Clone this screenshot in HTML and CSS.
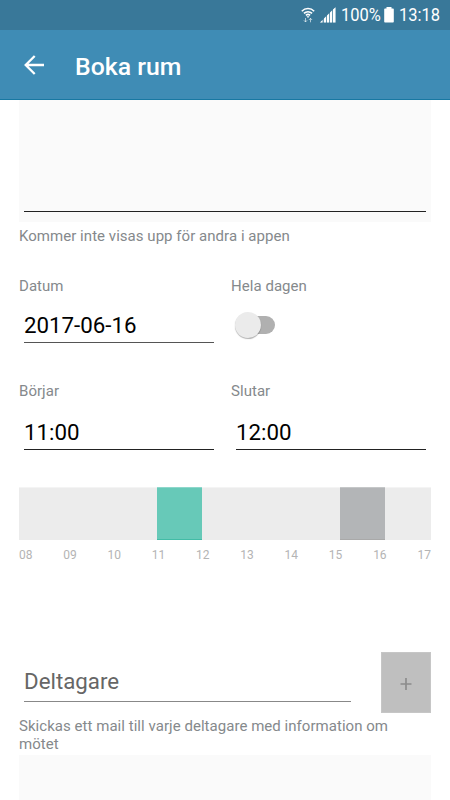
FILE: index.html
```html
<!DOCTYPE html>
<html lang="sv">
<head>
<meta charset="utf-8">
<title>Boka rum</title>
<link rel="stylesheet" href="styles.css">
</head>
<body>
<div class="status">
  <svg class="wifi" width="14" height="17" viewBox="0 0 14 17" fill="none" stroke="#fff">
    <path d="M.8 4.2C4.300.600 9.700.600 13.200 4.200M2.900 6.400c2.300-2.300 5.900-2.300 8.200 0M4.900 8.400c1.200-1.200 3-1.200 4.200 0" stroke-width="1.500"/>
    <path d="M5.500 9.200h3L7 10.900z" fill="#fff" stroke="none"/>
    <path d="M4.500 11v4M2.900 13.300l1.600 1.700 1.600-1.700M9.500 15.300v-4M7.900 13l1.600-1.700 1.600 1.700" stroke-opacity=".6"/>
  </svg>
  <svg class="signal" width="16" height="16" viewBox="0 0 16 16" fill="#fff">
    <path d="M0 15.500L2.500 13v2.500zM4 11.500L6 9.500v6H4zM7 8.500l2-2v9H7zM10 5.500l2-2v12h-2zM13 2.500l2.500-2.300v15.300H13z"/>
    <path d="M0 15.500L15.500.2v15.300z" opacity=".25"/>
  </svg>
  <span class="percent">100%</span>
  <svg class="battery" width="10" height="16" viewBox="0 0 10 16" fill="#fff"><path d="M2.500 0h5v1.500H9a.8.8 0 0 1 .8.800v12.400a.8.8 0 0 1-.8.800H1a.8.8 0 0 1-.8-.8V2.300a.8.8 0 0 1 .8-.8h1.500z"/></svg>
  <span class="clock">13:18</span>
</div>
<header class="appbar">
  <svg class="back" width="20" height="20" viewBox="0 0 20 20" fill="none" stroke="#fff" stroke-width="2.300"><path d="M20 10H1.800M10.700 1L1.700 10l9 9"/></svg>
  <h1>Boka rum</h1>
</header>
<main>
  <div class="notes"><div class="notes-line"></div></div>
  <p class="caption notes-caption">Kommer inte visas upp för andra i appen</p>
  <div class="row date-row">
    <div class="field">
      <div class="caption">Datum</div>
      <div class="input">2017-06-16</div>
    </div>
    <div class="field">
      <div class="caption">Hela dagen</div>
      <div class="switch"><div class="thumb"></div></div>
    </div>
  </div>
  <div class="row time-row">
    <div class="field">
      <div class="caption">Börjar</div>
      <div class="input">11:00</div>
    </div>
    <div class="field">
      <div class="caption">Slutar</div>
      <div class="input">12:00</div>
    </div>
  </div>
  <div class="timeline"><div class="chosen"></div><div class="busy"></div></div>
  <div class="hours"><span>08</span><span>09</span><span>10</span><span>11</span><span>12</span><span>13</span><span>14</span><span>15</span><span>16</span><span>17</span></div>
  <div class="participants">
    <div class="input hint">Deltagare</div>
    <div class="add"><svg width="12" height="12" viewBox="0 0 12 12" stroke="#8c8c8c" stroke-width="1.700"><path d="M.5 6h11M6 0v12"/></svg></div>
  </div>
  <p class="caption mail">Skickas ett mail till varje deltagare med information om mötet</p>
  <div class="list"></div>
</main>
</body>
</html>
```
FILE: styles.css
```css
* { box-sizing: border-box; }
body {
  margin: 0;
  width: 450px;
  height: 800px;
  overflow: hidden;
  background: #fff;
  color: #000;
  font-family: Roboto, "Liberation Sans", sans-serif;
}
.status {
  display: flex;
  align-items: center;
  justify-content: flex-end;
  height: 30px;
  padding-right: 10px;
  background: #397899;
  color: #fff;
  font-size: 18.500px;
  line-height: 31px;
}
.wifi { margin-right: 5px; }
.signal { margin-right: 5px; }
.percent, .clock { transform: scaleX(.89); transform-origin: 0 50%; white-space: nowrap; }
.percent { width: 40px; }
.battery { margin: 0 5px 0 3px; }
.clock { width: 41px; }
.appbar {
  display: flex;
  align-items: center;
  height: 70px;
  padding-left: 24px;
  border-bottom: 1px solid #1878a2;
  background: #3f8cb5;
  color: #fff;
}
.back { margin-right: 31px; }
h1 { margin: 4px 0 0; font-size: 24.800px; font-weight: 500; line-height: 30px; }
main { padding: 0 19px; }
.notes { height: 122px; padding: 111px 5px 0; background: #fafafa; }
.notes-line { height: 1px; background: #222; }
.caption { margin: 0; color: #85898c; font-size: 15px; letter-spacing: .040px; line-height: 18px; }
.notes-caption { margin-top: 5px; }
.row { display: grid; grid-template-columns: 200px 200px; column-gap: 12px; }
.date-row { margin-top: 32px; height: 66px; }
.time-row { margin-top: 39px; height: 68px; }
.input {
  margin-left: 5px;
  font-size: 22.300px;
  line-height: 30px;
  white-space: nowrap;
  border-bottom: 1px solid #555;
}
.field .input { width: 190px; height: 36px; margin-top: 12px; padding-top: 3px; }
.time-row .input { margin-top: 14px; border-color: #222; }
.switch {
  width: 36px;
  height: 18px;
  margin: 21px 0 0 8px;
  border-radius: 9px;
  background: #b0b0b0;
}
.thumb {
  position: relative;
  left: -4px;
  top: -4px;
  width: 26px;
  height: 26px;
  border-radius: 50%;
  background: #ebebeb;
  box-shadow: 0 1px 1px rgba(0, 0, 0, .3);
}
.timeline { display: flex; height: 53px; margin-top: 37px; background: #ececec; border-top: 1px solid #f4f4f4; }
.chosen { width: 45px; margin: -1px 0 0 138px; background: #67c9b8; border-top: 1px solid #8ed7cb; border-bottom: 1px solid #42bca6; }
.busy { width: 45px; margin: -1px 0 0 138px; background: #b3b5b7; border-top: 1px solid #c5c7c8; border-bottom: 1px solid #a9a9a9; }
.hours {
  display: flex;
  justify-content: space-between;
  margin-top: 8px;
  color: #b4b4b4;
  font-size: 12px;
  line-height: 14px;
}
.participants { display: flex; justify-content: space-between; margin-top: 90px; height: 61px; }
.hint { width: 327px; height: 50px; padding-top: 14px; color: #666; border-color: #888; }
.add { display: flex; align-items: center; justify-content: center; width: 50px; padding-top: 2px; background: #bfbfbf; border: 1px solid #c6c6c6; }
.mail { width: 390px; margin-top: 5px; line-height: 17.500px; }
.list { height: 45px; margin-top: 2px; background: #fafafa; }
```
